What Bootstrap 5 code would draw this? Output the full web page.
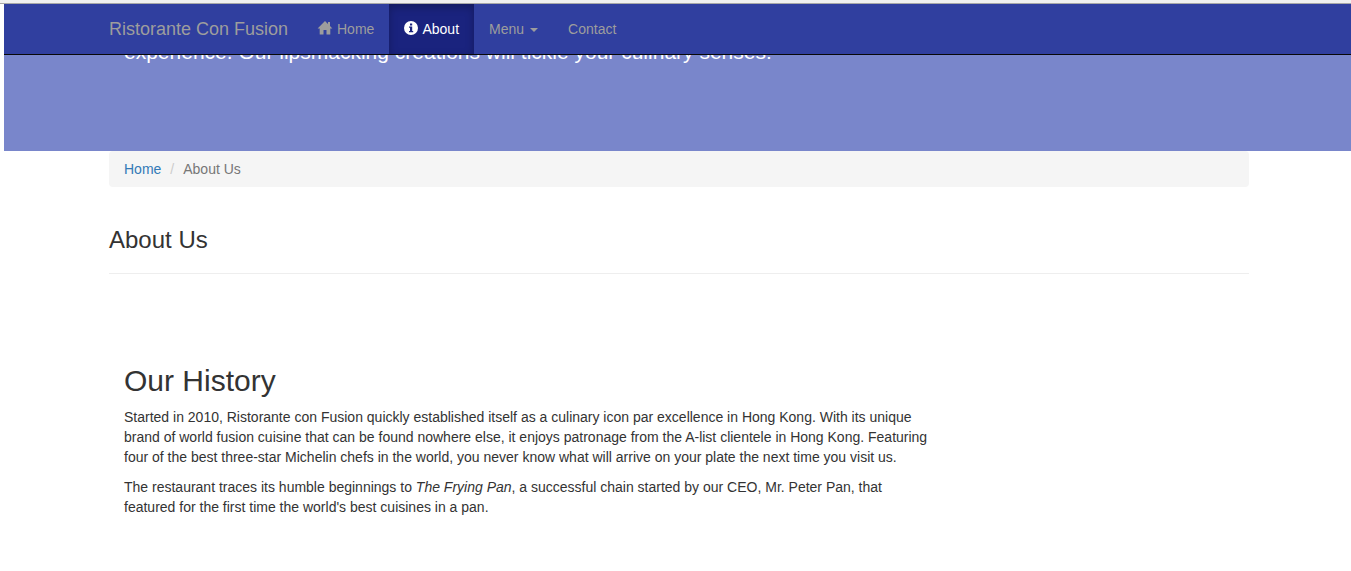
<!DOCTYPE html>
<html lang="en">
<head>
<meta charset="utf-8">
<meta name="viewport" content="width=device-width, initial-scale=1">
<title>Ristorante Con Fusion: About Us</title>
<link href="https://cdn.jsdelivr.net/npm/bootstrap@5.3.0/dist/css/bootstrap.min.css" rel="stylesheet">
<style>
body { font-family: "Liberation Sans", Arial, sans-serif; font-size: 14px; line-height: 20px; color: #333; background: #fff; overflow-x: hidden; }
.window-edge { height: 4px; background: #f0f0f0; border-bottom: 1px solid #a8a8a8; }
.page { margin-left: 4px; margin-right: -3px; }
.page .container { max-width: 1140px; }
.site-nav { background: #303f9f; border-bottom: 1px solid #080808; --bs-navbar-color: #9d9d9d; --bs-navbar-hover-color: #fff; --bs-navbar-active-color: #fff; }
.site-nav .navbar-brand { font-size: 18px; line-height: 20px; padding: 15px 0; margin-right: 15px; color: #9d9d9d; }
.site-nav .nav-link { padding: 15px !important; line-height: 20px; }
.site-nav .nav-link.active { background: #1a237e; box-shadow: inset 0 3px 9px rgba(0, 0, 0, .25); }
.glyph { width: 14px; height: 14px; fill: currentColor; vertical-align: -1px; margin-right: 1px; overflow: visible; }
.site-nav .dropdown-toggle::after { margin-left: 6px; vertical-align: 2px; border-top-width: 4px; border-right-width: 4px; border-left-width: 4px; }
.hero { background: #7986cb; color: #fff; height: 96px; overflow: hidden; }
.hero-text { font-size: 21px; line-height: 30px; margin: -18px 0 0; padding: 0 15px; }
.crumbs { background: #f5f5f5; border-radius: 4px; padding: 8px 15px; margin-bottom: 40px; --bs-breadcrumb-item-padding-x: 9px; --bs-breadcrumb-divider-color: #ccc; --bs-breadcrumb-item-active-color: #777; }
.crumbs a { color: #337ab7; text-decoration: none; }
h1, h2 { font-weight: 400; margin: 0; }
.page-title { font-size: 24px; line-height: 26px; padding-bottom: 20px; border-bottom: 1px solid #eee; }
.history { padding: 90px 15px 50px; }
.history h2 { font-size: 30px; line-height: 33px; margin-bottom: 10px; }
.history p { margin-bottom: 10px; }
.history-text { max-width: 808px; }
</style>
</head>
<body>
<div class="window-edge"></div>
<div class="page">
  <nav class="navbar navbar-expand site-nav p-0" aria-label="Main">
    <div class="container p-0">
      <a class="navbar-brand" href="#">Ristorante Con Fusion</a>
      <ul class="navbar-nav me-auto">
        <li class="nav-item"><a class="nav-link" href="#"><svg class="glyph" viewBox="0 0 14 14" aria-hidden="true"><path d="M7 0 L10 3 V1 H12 V5 L14.4 7.6 H12.3 V13.5 H8.5 V9 H5.5 V13.5 H1.7 V7.6 H-.4 Z"/></svg> Home</a></li>
        <li class="nav-item"><a class="nav-link active" aria-current="page" href="#"><svg class="glyph" viewBox="0 0 14 14" aria-hidden="true"><path fill-rule="evenodd" d="M7 0a7 7 0 1 0 0 14A7 7 0 0 0 7 0ZM6 2.5h2.2v2H6ZM5 5.5h3.2v4.6h1v1.2H5v-1.2h1V6.7H5Z"/></svg> About</a></li>
        <li class="nav-item dropdown"><a class="nav-link dropdown-toggle" href="#" role="button" data-bs-toggle="dropdown" aria-expanded="false">Menu</a>
          <ul class="dropdown-menu"><li><a class="dropdown-item" href="#">Menu</a></li></ul></li>
        <li class="nav-item"><a class="nav-link" href="#">Contact</a></li>
      </ul>
    </div>
  </nav>
  <header class="hero">
    <div class="container p-0">
      <p class="hero-text">experience. Our lipsmacking creations will tickle your culinary senses!</p>
    </div>
  </header>
  <main class="container p-0">
    <nav aria-label="Breadcrumb">
      <ol class="breadcrumb crumbs">
        <li class="breadcrumb-item"><a href="#">Home</a></li>
        <li class="breadcrumb-item active" aria-current="page">About Us</li>
      </ol>
    </nav>
    <h1 class="page-title">About Us</h1>
    <section class="history">
      <div class="history-text">
        <h2>Our History</h2>
        <p>Started in 2010, Ristorante con Fusion quickly established itself as a culinary icon par excellence in Hong Kong. With its unique brand of world fusion cuisine that can be found nowhere else, it enjoys patronage from the A-list clientele in Hong Kong. Featuring four of the best three-star Michelin chefs in the world, you never know what will arrive on your plate the next time you visit us.</p>
        <p>The restaurant traces its humble beginnings to <em>The Frying Pan</em>, a successful chain started by our CEO, Mr. Peter Pan, that featured for the first time the world's best cuisines in a pan.</p>
      </div>
    </section>
  </main>
</div>
<script src="https://cdn.jsdelivr.net/npm/bootstrap@5.3.0/dist/js/bootstrap.bundle.min.js"></script>
</body>
</html>
